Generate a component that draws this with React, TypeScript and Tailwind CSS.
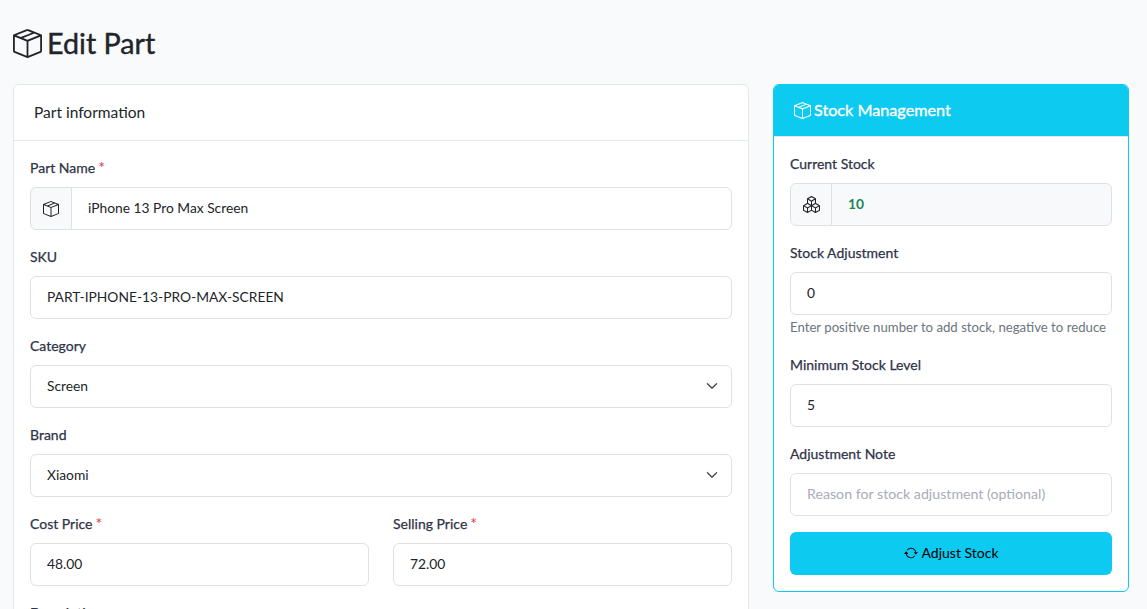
import type { ReactNode } from "react";
import { BsArrowRepeat, BsBoxSeam, BsBoxes, BsChevronDown } from "react-icons/bs";

const font = { fontFamily: '"Lato", "Noto Sans", sans-serif' };

const Label = ({ children, required }: { children: ReactNode; required?: boolean }) => (
  <label className="mb-2 block h-[22px] text-[14px] leading-[22px] text-[#2f3349] [-webkit-text-stroke:0.25px_#2f3349]">
    {children}
    {required && <span className="ml-[3px] text-[16px] leading-none text-[#dc3545] [-webkit-text-stroke:0]">*</span>}
  </label>
);

const inputClass =
  "block h-[43px] w-full rounded-md border border-[#dee2e6] bg-white px-4 pb-[2px] text-[13.8px] text-[#212529] outline-none placeholder:text-[14.2px] placeholder:text-[#a9abbb]";

const SelectField = ({ value }: { value: string }) => (
  <div className="relative">
    <select defaultValue={value} className={`${inputClass} appearance-none !pb-0`}>
      <option>{value}</option>
    </select>
    <BsChevronDown className="absolute top-[15px] right-[14px] text-[12px] text-[#343a40] [stroke-width:1px]" />
  </div>
);

export default function App() {
  return (
    <div style={font} className="h-screen overflow-hidden bg-[#f9fafc] px-[13px] pt-[28px] text-[#212529]">
      <h1 className="mb-[25px] flex h-[31px] items-center gap-[5px] text-[28.7px] leading-[31px] text-[#212529] [-webkit-text-stroke:0.4px_#212529]">
        <BsBoxSeam className="text-[29px]" />
        Edit Part
      </h1>

      <div className="flex items-start gap-6">
        <div className="w-[736px] shrink-0 rounded-md border border-[#e5e7ee] bg-white">
          <div className="flex h-[56px] items-center border-b border-[#e5e7ee] px-5 text-[15.5px] text-[#212529]">
            Part information
          </div>
          <div className="p-4">
            <div className="mb-4">
              <Label required>Part Name</Label>
              <div className="flex">
                <span className="flex h-[43px] w-[42px] shrink-0 items-center justify-center rounded-l-md border border-[#dee2e6] bg-[#f8f9fa] text-[16px]">
                  <BsBoxSeam />
                </span>
                <input
                  defaultValue="iPhone 13 Pro Max Screen"
                  className={`${inputClass} -ml-px rounded-l-none`}
                />
              </div>
            </div>
            <div className="mb-4">
              <Label>SKU</Label>
              <input defaultValue="PART-IPHONE-13-PRO-MAX-SCREEN" className={inputClass} />
            </div>
            <div className="mb-4">
              <Label>Category</Label>
              <SelectField value="Screen" />
            </div>
            <div className="mb-4">
              <Label>Brand</Label>
              <SelectField value="Xiaomi" />
            </div>
            <div className="mb-4 grid grid-cols-2 gap-6">
              <div>
                <Label required>Cost Price</Label>
                <input defaultValue="48.00" className={inputClass} />
              </div>
              <div>
                <Label required>Selling Price</Label>
                <input defaultValue="72.00" className={inputClass} />
              </div>
            </div>
            <Label>Description</Label>
          </div>
        </div>

        <div className="w-[356px] shrink-0 overflow-hidden rounded-md border border-[#0dcaf0] bg-white">
          <div className="flex h-[52px] items-center gap-[3px] border-b border-[#e5e7ee] bg-[#0dcaf0] px-5 pb-px text-[16.2px] text-white [-webkit-text-stroke:0.35px_#ffffff]">
            <BsBoxSeam className="text-[17px]" />
            Stock Management
          </div>
          <div className="p-4">
            <div className="mb-4">
              <Label>Current Stock</Label>
              <div className="flex">
                <span className="flex h-[43px] w-[42px] shrink-0 items-center justify-center rounded-l-md border border-[#dee2e6] bg-[#f8f9fa] text-[17px]">
                  <BsBoxes />
                </span>
                <input
                  readOnly
                  defaultValue="10"
                  className={`${inputClass} -ml-px rounded-l-none !bg-[#f8f9fa] font-bold !text-[#198754]`}
                />
              </div>
            </div>
            <div className="mb-4">
              <Label>Stock Adjustment</Label>
              <input defaultValue="0" className={inputClass} />
              <p className="mt-1 h-[19px] text-[13.2px] leading-[17px] text-[#6c757d]">
                Enter positive number to add stock, negative to reduce
              </p>
            </div>
            <div className="mb-4">
              <Label>Minimum Stock Level</Label>
              <input defaultValue="5" className={inputClass} />
            </div>
            <div className="mb-4">
              <Label>Adjustment Note</Label>
              <input placeholder="Reason for stock adjustment (optional)" className={inputClass} />
            </div>
            <button className="flex h-[43px] w-full items-center justify-center gap-1 rounded-md bg-[#0dcaf0] pb-[2px] text-[14px] text-black">
              <BsArrowRepeat className="text-[14px]" />
              Adjust Stock
            </button>
          </div>
        </div>
      </div>
    </div>
  );
}
